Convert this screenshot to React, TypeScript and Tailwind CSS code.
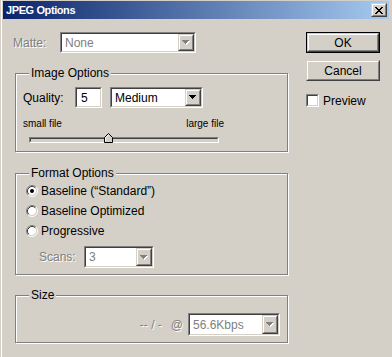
import type { ReactNode } from "react";

const disabledText = "text-[#808080] [text-shadow:1px_1px_0_#fff]";

function Sunken({ className = "", inner = "bg-white", children }: { className?: string; inner?: string; children?: ReactNode }) {
  return (
    <div className={`border border-t-[#808080] border-l-[#808080] border-r-white border-b-white ${className}`}>
      <div className={`flex h-full w-full items-center border border-t-[#404040] border-l-[#404040] border-r-[#d4d0c8] border-b-[#d4d0c8] ${inner}`}>
        {children}
      </div>
    </div>
  );
}

function Raised({ className = "", children }: { className?: string; children?: ReactNode }) {
  return (
    <div className={`border border-t-[#d4d0c8] border-l-[#d4d0c8] border-r-[#404040] border-b-[#404040] bg-[#d4d0c8] ${className}`}>
      <div className="flex h-full w-full items-center justify-center border border-t-white border-l-white border-r-[#808080] border-b-[#808080]">
        {children}
      </div>
    </div>
  );
}

function Arrow({ disabled }: { disabled?: boolean }) {
  return (
    <svg width="8" height="5" viewBox="0 0 8 5" shapeRendering="crispEdges">
      {disabled && <path d="M1 1h7v1h-1v1h-1v1h-1v1h-1v-1h-1v-1h-1v-1h-1z" fill="#fff" />}
      <path d="M0 0h7v1h-1v1h-1v1h-1v1h-1v-1h-1v-1h-1v-1h-1z" fill={disabled ? "#808080" : "#000"} />
    </svg>
  );
}

function Select({ value, disabled, className }: { value: string; disabled?: boolean; className: string }) {
  return (
    <Sunken className={className}>
      <div className={`flex-1 pl-[3px] text-[12px] leading-none ${disabled ? "text-[#808080]" : "text-black"}`}>{value}</div>
      <Raised className="h-full w-[16px]">
        <Arrow disabled={disabled} />
      </Raised>
    </Sunken>
  );
}

function Radio({ checked, label }: { checked?: boolean; label: string }) {
  return (
    <div className="flex h-[20px] items-center">
      <svg width="12" height="12" viewBox="0 0 12 12">
        <circle cx="6" cy="6" r="4.5" fill="#fff" />
        <path d="M2.11 9.89A5.5 5.5 0 0 1 9.89 2.11" stroke="#808080" fill="none" />
        <path d="M9.89 2.11A5.5 5.5 0 0 1 2.11 9.89" stroke="#fff" fill="none" />
        <path d="M2.82 9.18A4.5 4.5 0 0 1 9.18 2.82" stroke="#404040" fill="none" />
        <path d="M9.18 2.82A4.5 4.5 0 0 1 2.82 9.18" stroke="#d4d0c8" fill="none" />
        {checked && <circle cx="6" cy="6" r="2" fill="#000" />}
      </svg>
      <span className="ml-[3px] text-[12px] leading-none">{label}</span>
    </div>
  );
}

function Group({ title, className, children }: { title: string; className: string; children?: ReactNode }) {
  return (
    <div className={`relative ml-[15px] w-[273px] border border-[#808080] shadow-[inset_1px_1px_0_#fff,1px_1px_0_#fff] ${className}`}>
      <span className="absolute left-[13px] top-[-8px] bg-[#d4d0c8] px-[2px] text-[12px] leading-[14px]">{title}</span>
      {children}
    </div>
  );
}

export default function App() {
  return (
    <div className="h-[357px] w-[392px] overflow-hidden bg-[#d4d0c8] font-['Liberation_Sans',Arial,sans-serif] text-black shadow-[inset_1px_0_0_#d4d0c8,inset_2px_0_0_#fff]">
      {/* title bar */}
      <div className="mx-[3px] mt-[1px] flex h-[18px] items-center bg-[linear-gradient(to_right,#0a246a,#a6caf0)]">
        <span className="pl-[3px] text-[11px] font-bold leading-none tracking-[-0.4px] text-white">JPEG Options</span>
        <Raised className="ml-auto mr-[2px] h-[14px] w-[16px]">
          <svg width="8" height="7" viewBox="0 0 8 7" shapeRendering="crispEdges">
            <path d="M0 0h2v1h1v1h2v-1h1v-1h2v1h-1v1h-1v1h-1v1h1v1h1v1h1v1h-2v-1h-1v-1h-2v1h-1v1h-2v-1h1v-1h1v-1h1v-1h-1v-1h-1z" fill="#000" />
          </svg>
        </Raised>
      </div>

      <div className="flex">
        {/* left column */}
        <div className="w-[289px]">
          <div className="mt-[13px] flex h-[21px] items-center">
            <span className={`ml-[13px] w-[47px] text-[12px] leading-none ${disabledText}`}>Matte:</span>
            <Select value="None" disabled className="h-[21px] w-[136px]" />
          </div>

          <Group title="Image Options" className="mt-[20px] h-[79px]">
            <div className="pl-[7px] pt-[13px]">
              <div className="flex h-[21px] items-center">
                <span className="w-[52px] text-[12px] leading-none">Quality:</span>
                <Sunken className="h-[21px] w-[27px]">
                  <span className="pl-[4px] text-[12px] leading-none">5</span>
                </Sunken>
                <Select value="Medium" className="ml-[8px] h-[21px] w-[93px]" />
              </div>
              <div className="mt-[9px] flex w-[201px] justify-between text-[10px] leading-[13px]">
                <span>small file</span>
                <span>large file</span>
              </div>
              <div className="relative ml-[6px] mt-[7px] w-[190px]">
                <Sunken className="h-[6px] w-[190px]" inner="bg-[#d4d0c8]" />
                <svg className="absolute left-[75px] top-[-4px]" width="9" height="10" viewBox="0 0 9 10">
                  <path d="M0.5 9.5V4.5L4.5 0.5L8.5 4.5V9.5Z" fill="#d4d0c8" stroke="#000" />
                  <path d="M1.5 8.5V4.9L4.5 1.9" fill="none" stroke="#fff" />
                </svg>
              </div>
            </div>
          </Group>

          <Group title="Format Options" className="mt-[21px] h-[102px]">
            <div className="pl-[10px] pt-[7px]">
              <Radio checked label="Baseline (“Standard”)" />
              <Radio label="Baseline Optimized" />
              <Radio label="Progressive" />
              <div className="mt-[5px] flex h-[22px] items-center">
                <span className={`ml-[13px] w-[45px] text-[12px] leading-none ${disabledText}`}>Scans:</span>
                <Select value="3" disabled className="h-[22px] w-[70px]" />
              </div>
            </div>
          </Group>

          <Group title="Size" className="mt-[20px] h-[48px]">
            <div className="flex items-center justify-end pr-[7px] pt-[17px]">
              <span className={`text-[12px] leading-none ${disabledText}`}>-- / -</span>
              <span className={`ml-[9px] text-[12px] leading-none ${disabledText}`}>@</span>
              <Select value="56.6Kbps" disabled className="ml-[5px] h-[23px] w-[92px]" />
            </div>
          </Group>
        </div>

        {/* right column */}
        <div className="ml-[17px] mt-[13px] flex flex-col">
          <div className="h-[21px] w-[74px] border border-black">
            <Raised className="h-full w-full">
              <span className="text-[12px] leading-none">OK</span>
            </Raised>
          </div>
          <Raised className="mt-[7px] h-[21px] w-[74px]">
            <span className="text-[12px] leading-none">Cancel</span>
          </Raised>
          <div className="mt-[13px] flex items-center">
            <Sunken className="h-[13px] w-[13px]" />
            <span className="ml-[4px] text-[12px] leading-none">Preview</span>
          </div>
        </div>
      </div>
    </div>
  );
}
